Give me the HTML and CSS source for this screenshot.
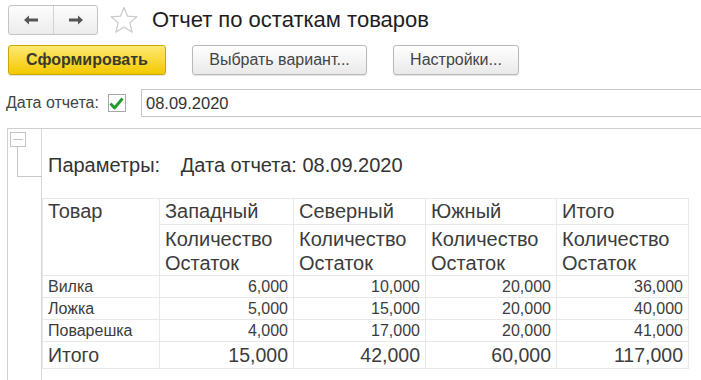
FILE: index.html
```html
<!DOCTYPE html>
<html lang="ru">
<head>
    <meta charset="UTF-8">
    <title>Отчет по остаткам товаров</title>
    <link rel="stylesheet" href="styles.css">
</head>
<body>
    <div class="header">
        <div class="nav">
            <button class="nav-btn">
                <svg width="16" height="12" viewBox="0 0 16 12"><path d="M1 6 L6 1.5 V4.5 H15 V7.5 H6 V10.5 Z" fill="#555"/></svg>
            </button>
            <button class="nav-btn">
                <svg width="16" height="12" viewBox="0 0 16 12"><path d="M15 6 L10 1.5 V4.5 H1 V7.5 H10 V10.5 Z" fill="#555"/></svg>
            </button>
        </div>
        <svg class="star" width="30" height="28" viewBox="0 0 30 28">
            <path d="M15 1.5 L18.6 10.2 L28 10.8 L20.8 16.9 L23.1 26.2 L15 21.1 L6.9 26.2 L9.2 16.9 L2 10.8 L11.4 10.2 Z" fill="none" stroke="#c9c9c9" stroke-width="1.2" stroke-linejoin="round"/>
        </svg>
        <h1 class="title">Отчет по остаткам товаров</h1>
    </div>

    <div class="toolbar">
        <button class="btn btn-primary">Сформировать</button>
        <button class="btn btn-wide">Выбрать вариант...</button>
        <button class="btn btn-mid">Настройки...</button>
    </div>

    <div class="field-row">
        <span class="field-label">Дата отчета:</span>
        <span class="checkbox">
            <svg width="15" height="13" viewBox="0 0 15 13"><path d="M1.5 6.5 L5.5 11 L13.5 1.5" fill="none" stroke="#1f9a2c" stroke-width="2.8" stroke-linejoin="round"/></svg>
        </span>
        <div class="input">08.09.2020</div>
    </div>

    <div class="report">
        <div class="gutter">
            <div class="expander"></div>
            <div class="tree-line"></div>
        </div>
        <div class="sheet">
            <div class="params">
                <span class="params-label">Параметры:</span>
                <span>Дата отчета: 08.09.2020</span>
            </div>
            <table class="grid">
                <colgroup>
                    <col class="c1"><col class="c2"><col class="c3"><col class="c4"><col class="c5">
                </colgroup>
                <tr class="head">
                    <td rowspan="2">Товар</td>
                    <td>Западный</td>
                    <td>Северный</td>
                    <td>Южный</td>
                    <td>Итого</td>
                </tr>
                <tr class="head head2">
                    <td>Количество<br>Остаток</td>
                    <td>Количество<br>Остаток</td>
                    <td>Количество<br>Остаток</td>
                    <td>Количество<br>Остаток</td>
                </tr>
                <tr class="row">
                    <td>Вилка</td><td class="num">6,000</td><td class="num">10,000</td><td class="num">20,000</td><td class="num">36,000</td>
                </tr>
                <tr class="row">
                    <td>Ложка</td><td class="num">5,000</td><td class="num">15,000</td><td class="num">20,000</td><td class="num">40,000</td>
                </tr>
                <tr class="row">
                    <td>Поварешка</td><td class="num">4,000</td><td class="num">17,000</td><td class="num">20,000</td><td class="num">41,000</td>
                </tr>
                <tr class="total">
                    <td>Итого</td><td class="num">15,000</td><td class="num">42,000</td><td class="num">60,000</td><td class="num">117,000</td>
                </tr>
            </table>
        </div>
    </div>
</body>
</html>
```

FILE: styles.css
```css
body {
    margin: 0;
    background-color: #fff;
    color: #333;
    font-family: "Liberation Sans", Arial, sans-serif;
    overflow: hidden;
}

.header {
    display: flex;
    align-items: center;
    padding: 5px 0 0 8px;
    height: 30px;
}

.nav {
    display: flex;
    height: 28px;
    border: 1px solid #c4c4c4;
    border-radius: 3px;
    background: linear-gradient(#fdfdfd, #ececec);
    overflow: hidden;
}

.nav-btn {
    width: 44px;
    height: 28px;
    border: none;
    background: transparent;
    padding: 0;
    display: flex;
    align-items: center;
    justify-content: center;
}

.nav-btn + .nav-btn {
    border-left: 1px solid #d2d2d2;
}

.star {
    margin-left: 11px;
}

.title {
    margin: 0 0 0 13px;
    font-size: 22px;
    font-weight: normal;
    color: #1e1e1e;
}

.toolbar {
    display: flex;
    gap: 26px;
    padding: 10px 0 0 8px;
}

.btn {
    height: 30px;
    font-family: "Liberation Sans", Arial, sans-serif;
    font-size: 16px;
    color: #444;
    border: 1px solid #b9b9b9;
    border-radius: 3px;
    background: linear-gradient(#ffffff, #e9e9e9);
    box-shadow: 0 1px 1px rgba(0, 0, 0, 0.12);
    padding: 0;
}

.btn-primary {
    width: 158px;
    font-weight: bold;
    color: #3a3a2a;
    border-color: #c9a800;
    background: linear-gradient(#fde872, #f3c900);
}

.btn-wide {
    width: 175px;
}

.btn-mid {
    width: 126px;
}

.field-row {
    display: flex;
    align-items: center;
    padding: 14px 0 0 6px;
}

.field-label {
    font-size: 16px;
    color: #444;
}

.checkbox {
    width: 16px;
    height: 16px;
    border: 1px solid #a8a8a8;
    margin-left: 9px;
    display: flex;
    align-items: center;
    justify-content: center;
}

.input {
    flex: 1;
    height: 28px;
    margin-left: 15px;
    margin-right: -4px;
    border: 1px solid #c5c5c5;
    box-sizing: border-box;
    padding-left: 4px;
    line-height: 26px;
    font-size: 16.5px;
    color: #333;
}

.report {
    display: flex;
    margin: 11px -4px 0 7px;
    border-top: 1px solid #d0d0d0;
    border-left: 1px solid #d0d0d0;
    height: 260px;
}

.gutter {
    position: relative;
    width: 33px;
    border-right: 1px solid #d8d8d8;
}

.expander {
    position: absolute;
    left: 2px;
    top: 3px;
    width: 14px;
    height: 13px;
    border: 1px solid #c4c4c4;
    background: linear-gradient(#c4c4c4, #c4c4c4) center / 10px 1px no-repeat;
}

.tree-line {
    position: absolute;
    left: 9px;
    top: 18px;
    width: 24px;
    height: 29px;
    border-left: 1px solid #c8c8c8;
    border-bottom: 1px solid #c8c8c8;
}

.sheet {
    flex: 1;
}

.params {
    padding: 25px 0 0 6px;
    font-size: 20px;
    color: #333;
    height: 44px;
}

.params-label {
    margin-right: 15px;
}

.grid {
    border-collapse: collapse;
    color: #3c3c3c;
}

.grid td {
    border: 1px solid #e8e8e8;
    padding: 0 5px;
    vertical-align: top;
}

.c1 { width: 117px; }
.c2 { width: 134px; }
.c3 { width: 132px; }
.c4 { width: 131px; }
.c5 { width: 132px; }

.head td {
    font-size: 20px;
    height: 25px;
    line-height: 25px;
}

.head2 td {
    height: 48px;
    line-height: 24px;
    padding-top: 2px;
}

.row td {
    font-size: 16px;
    height: 21px;
    line-height: 21px;
}

.total td {
    font-size: 19.5px;
    height: 26px;
    line-height: 26px;
}

.num {
    text-align: right;
}
```
